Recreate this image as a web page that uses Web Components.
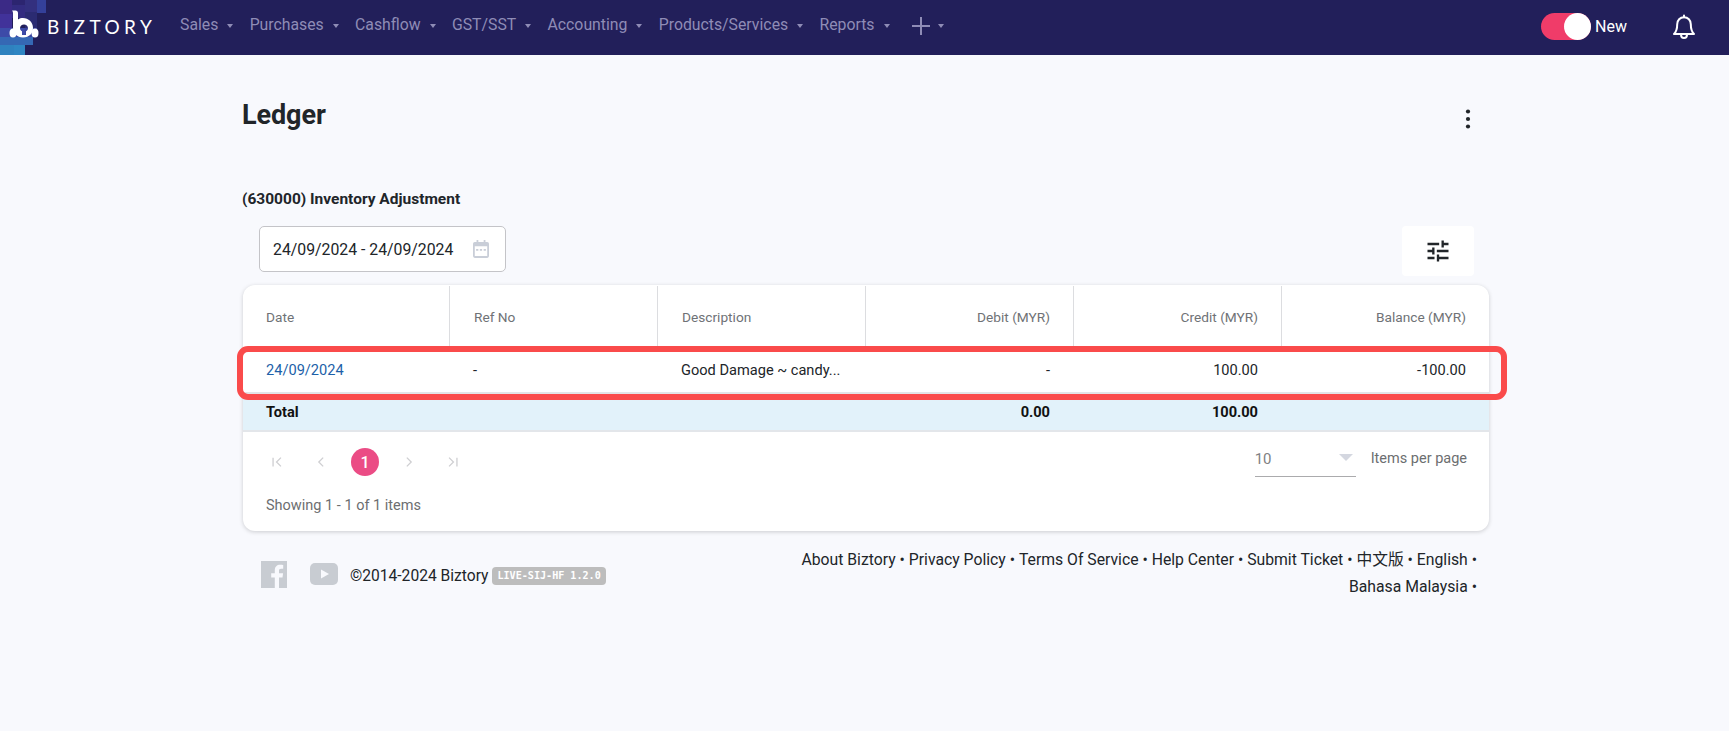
<!DOCTYPE html>
<html lang="en">
<head>
<meta charset="utf-8">
<title>Ledger</title>
<style>
  html, body { margin: 0; height: 100%; }
  body { background: #f8f9fd; font-family: Roboto, "Noto Sans CJK SC", sans-serif; color: #212529; overflow: hidden; }
</style>
</head>
<body>
<biz-nav>
  <nav-item>Sales</nav-item>
  <nav-item>Purchases</nav-item>
  <nav-item>Cashflow</nav-item>
  <nav-item>GST/SST</nav-item>
  <nav-item>Accounting</nav-item>
  <nav-item>Products/Services</nav-item>
  <nav-item>Reports</nav-item>
  <nav-item plus></nav-item>
</biz-nav>
<ledger-page title="Ledger" account="(630000) Inventory Adjustment" range="24/09/2024 - 24/09/2024">
  <ledger-table></ledger-table>
  <biz-footer></biz-footer>
</ledger-page>

<script>
/* top bar */
const navTemplate = document.createElement('template');
navTemplate.innerHTML = `
  <style>
    :host { display: flex; align-items: center; height: 55px; background: #221f5a; position: relative; }
    .logo { display: block; width: 46px; height: 55px; flex: none; }
    .brand { width: 133px; flex: none; color: #fff; font: 400 19px Lato, sans-serif; letter-spacing: 4.45px; margin-left: 1px; position: relative; top: -1px; white-space: nowrap; }
    .items { display: flex; align-items: center; gap: 16.3px; flex: 1; position: relative; top: -3px; }
    .right { display: flex; align-items: center; padding-right: 33px; position: relative; top: -1px; }
    .switch { width: 50px; height: 27px; border-radius: 14px; background: #f03c69; position: relative; }
    .switch::after { content: ''; position: absolute; right: 0; top: 0; width: 27px; height: 27px; border-radius: 50%; background: #fff; }
    .new { color: #fff; font-size: 16px; margin-left: 4px; margin-right: 45px; }
    .bell { display: block; width: 24px; height: 26px; }
  </style>
  <svg class="logo" viewBox="0 0 46 55">
    <rect width="46" height="55" fill="#221f5a"/>
    <rect x="0" y="0" width="12" height="14" fill="#3b2a86"/>
    <rect x="12" y="0" width="13" height="5" fill="#2c2570"/>
    <rect x="25" y="0" width="12" height="12" fill="#33307f"/>
    <rect x="37" y="0" width="9" height="13" fill="#34409a"/>
    <rect x="0" y="14" width="12" height="14" fill="#41329a"/>
    <rect x="12" y="5" width="13" height="13" fill="#332c80"/>
    <rect x="25" y="12" width="12" height="16" fill="#2b2b72"/>
    <rect x="0" y="28" width="25" height="9" fill="#3d4ba8"/>
    <rect x="25" y="28" width="12" height="9" fill="#3a45a0"/>
    <rect x="0" y="37" width="33" height="8" fill="#3568b4"/>
    <rect x="0" y="45" width="14" height="10" fill="#2f82bf"/>
    <rect x="14" y="45" width="11" height="10" fill="#2f86c3"/>
    <ellipse cx="13" cy="33" rx="3.500" ry="4.500" fill="#fff"/>
    <ellipse cx="35" cy="33" rx="3.500" ry="4.500" fill="#fff"/>
    <path fill="#fff" fill-rule="evenodd" d="M13 10.500h2.500c1.500 0 2.500 1 2.500 2.500v6.500c1.500-.9 3.200-1.400 5-1.400 5.500 0 10 4.300 10 9.700 0 5.400-3.500 9.700-10 9.700-6 0-10-4.300-10-9.700V13.500c0-1.300-.4-2.200-1-3zM24 24.500c-2.200 0-4 1.500-4 3.700 0 1.400.8 2.500 2 3.100V35h4v-3.700c1.200-.6 2-1.700 2-3.100 0-2.200-1.800-3.700-4-3.700z"/>
  </svg>
  <div class="brand">BIZTORY</div>
  <div class="items"><slot></slot></div>
  <div class="right">
    <div class="switch"></div>
    <span class="new">New</span>
    <svg class="bell" viewBox="0 0 24 26" fill="none" stroke="#fff" stroke-width="2" stroke-linecap="round" stroke-linejoin="round">
      <path d="M12 3.200c-4 0-6.800 3-6.800 7 0 5.500-1.200 7.800-3.200 9.800h20c-2-2-3.200-4.300-3.200-9.800 0-4-2.800-7-6.800-7z"/>
      <path d="M12 1.500v1.700M9 20.500c0 2 1.300 3.500 3 3.500s3-1.500 3-3.500"/>
    </svg>
  </div>
`;
class BizNav extends HTMLElement {
  constructor() {
    super();
    this.attachShadow({ mode: 'open' }).appendChild(navTemplate.content.cloneNode(true));
  }
}
customElements.define('biz-nav', BizNav);

class NavItem extends HTMLElement {
  constructor() {
    super();
    this.attachShadow({ mode: 'open' }).innerHTML = `
      <style>
        :host { display: inline-flex; align-items: center; color: #8f8cb6; font-size: 15.8px; white-space: nowrap; }
        .caret { width: 0; height: 0; margin-left: 9px; border: 3.750px solid transparent; border-top: 4px solid #8f8cb6; border-bottom: 0; position: relative; top: 1px; }
        .plus { display: block; width: 20px; height: 20px; margin: 2px -2px 0 5px; }
      </style>
      ${this.hasAttribute('plus') ? '<svg class="plus" viewBox="0 0 20 20"><path d="M1 10h18M10 1v18" stroke="#8f8cb6" stroke-width="2"/></svg>' : '<slot></slot>'}
      <span class="caret"></span>`;
  }
}
customElements.define('nav-item', NavItem);

/* page head + filter row */
class LedgerPage extends HTMLElement {
  constructor() {
    super();
    this.attachShadow({ mode: 'open' }).innerHTML = `
      <style>
        :host { display: block; padding: 42px 240px 0 242px; }
        .head { display: flex; justify-content: space-between; align-items: flex-start; height: 92px; }
        h1 { margin: 0; font-size: 27px; line-height: 36px; font-weight: 700; color: #212529; letter-spacing: -.1px; }
        .dots { display: block; width: 24px; height: 24px; margin: 10px 9px 0 0; }
        .account { font-size: 15.5px; line-height: 20px; font-weight: 700; color: #212529; height: 37px; }
        .filters { display: flex; justify-content: space-between; align-items: flex-start; padding-left: 17px; height: 59px; }
        .range { display: flex; align-items: center; box-sizing: border-box; width: 247px; height: 46px; padding: 0 16px 0 13px; background: #fff; border: 1px solid #c4c4c8; border-radius: 5px; font-size: 15.8px; color: #212529; white-space: nowrap; justify-content: space-between; }
        .range svg { display: block; width: 16px; height: 18px; flex: none; }
        .tune { display: flex; align-items: center; justify-content: center; width: 72px; height: 50px; background: #fff; border-radius: 4px; margin-right: 15px; }
        .tune svg { display: block; width: 28px; height: 28px; }
      </style>
      <div class="head">
        <h1>${this.getAttribute('title')}</h1>
        <svg class="dots" viewBox="0 0 24 24" fill="#212529"><circle cx="12" cy="4.500" r="2.100"/><circle cx="12" cy="12" r="2.100"/><circle cx="12" cy="19.500" r="2.100"/></svg>
      </div>
      <div class="account">${this.getAttribute('account')}</div>
      <div class="filters">
        <div class="range">
          <span>${this.getAttribute('range')}</span>
          <svg viewBox="0 0 18 20" fill="#c9ced8"><path d="M4 0h2v2h6V0h2v2h2a2 2 0 0 1 2 2v14a2 2 0 0 1-2 2H2a2 2 0 0 1-2-2V4a2 2 0 0 1 2-2h2zM2 7v11h14V7z"/><rect x="3.500" y="10" width="2.500" height="2"/><rect x="7.700" y="10" width="2.500" height="2"/><rect x="12" y="10" width="2.500" height="2"/></svg>
        </div>
        <div class="tune"><svg viewBox="0 0 24 24" fill="#212529"><path d="M3 17v2h6v-2H3zM3 5v2h10V5H3zm10 16v-2h8v-2h-8v-2h-2v6h2zM7 9v2H3v2h4v2h2V9H7zm14 4v-2H11v2h10zm-6-4h2V7h4V5h-4V3h-2v6z"/></svg></div>
      </div>
      <slot></slot>`;
  }
}
customElements.define('ledger-page', LedgerPage);

/* table card with pager */
const tableTemplate = document.createElement('template');
tableTemplate.innerHTML = `
  <style>
    :host { display: block; position: relative; margin-left: 1px; background: #fff; border-radius: 12px; box-shadow: 0 1px 4px rgba(0,0,0,.18); height: 246px; font-size: 14.6px; }
    .row { display: grid; grid-template-columns: 206px 208px 208px 208px 208px 208px; align-items: center; }
    .row > div { padding: 0 23px 0 24px; white-space: nowrap; }
    .row > div:first-child { padding-left: 23px; }
    .r { text-align: right; }
    .head { height: 61px; color: #6f7276; font-size: 13.7px; align-items: stretch; }
    .head > div { display: flex; align-items: center; border-left: 1px solid #dcdde0; position: relative; top: 1px; }
    .head > div:first-child { border-left: 0; }
    .head > .r { justify-content: flex-end; }
    .body { height: 46px; color: #212529; border-bottom: 2px solid #e3e4e6; }
    .body > div { position: relative; top: 1px; }
    .body a { color: #1c5fa8; text-decoration: none; }
    .total { height: 36px; background: #e2f2fa; color: #111; font-weight: 700; border-bottom: 2px solid #e3e6ea; }
    .foot { display: flex; justify-content: space-between; align-items: flex-start; padding: 14px 22px 0 12px; height: 40px; color: #6c6e70; }
    .pager { display: flex; align-items: center; height: 28px; margin-top: 2px; }
    .pager svg { display: block; width: 14px; height: 14px; fill: none; stroke: #cfcfd2; stroke-width: 1.500; }
    .pager .p { display: flex; align-items: center; justify-content: center; width: 44px; height: 28px; }
    .pager b { display: flex; align-items: center; justify-content: center; width: 28px; height: 28px; margin: 0 8px 0 8px; border-radius: 50%; background: #eb4c85; color: #fff; font-weight: 500; font-size: 16px; }
    .per { display: flex; align-items: flex-start; }
    .select { display: flex; justify-content: space-between; box-sizing: border-box; width: 101px; height: 31px; padding: 4px 3px 0 0; border-bottom: 1px solid #ababad; font-size: 15px; color: #808184; margin-right: 15px; }
    .select i { display: block; width: 0; height: 0; margin-top: 4px; border: 7px solid transparent; border-top: 7px solid #d4d7e0; border-bottom: 0; }
    .label { padding-top: 4px; font-size: 14.5px; }
    .showing { padding: 11px 0 0 23px; font-size: 14.5px; color: #6c6e70; }
    .mark { position: absolute; left: -6px; right: -18px; top: 61px; height: 54px; box-sizing: border-box; border: 6px solid #fa4b4b; border-radius: 11px; pointer-events: none; }
  </style>
  <div class="row head">
    <div>Date</div><div>Ref No</div><div>Description</div>
    <div class="r">Debit (MYR)</div><div class="r">Credit (MYR)</div><div class="r">Balance (MYR)</div>
  </div>
  <div class="row body">
    <div><a href="#">24/09/2024</a></div><div>-</div><div>Good Damage ~ candy...</div>
    <div class="r">-</div><div class="r">100.00</div><div class="r">-100.00</div>
  </div>
  <div class="row total">
    <div>Total</div><div></div><div></div><div class="r">0.00</div><div class="r">100.00</div><div></div>
  </div>
  <div class="foot">
    <div class="pager">
      <span class="p"><svg viewBox="0 0 16 16"><path d="M3.500 3v10M12.500 3l-5 5 5 5"/></svg></span>
      <span class="p"><svg viewBox="0 0 16 16"><path d="M10.500 3l-5 5 5 5"/></svg></span>
      <b>1</b>
      <span class="p"><svg viewBox="0 0 16 16"><path d="M5.500 3l5 5-5 5"/></svg></span>
      <span class="p"><svg viewBox="0 0 16 16"><path d="M3.500 3l5 5-5 5M12.500 3v10"/></svg></span>
    </div>
    <div class="per">
      <div class="select"><span>10</span><i></i></div>
      <span class="label">Items per page</span>
    </div>
  </div>
  <div class="showing">Showing 1 - 1 of 1 items</div>
  <div class="mark"></div>
`;
class LedgerTable extends HTMLElement {
  constructor() {
    super();
    this.attachShadow({ mode: 'open' }).appendChild(tableTemplate.content.cloneNode(true));
  }
}
customElements.define('ledger-table', LedgerTable);

/* footer */
const FOOTER_LINKS = ['About Biztory', 'Privacy Policy', 'Terms Of Service', 'Help Center', 'Submit Ticket', '中文版', 'English', 'Bahasa Malaysia'];

class BizFooter extends HTMLElement {
  constructor() {
    super();
    const links = FOOTER_LINKS.map(l => `<span class="link">${l} •</span>`).join(' ');
    this.attachShadow({ mode: 'open' }).innerHTML = `
      <style>
        :host { display: flex; justify-content: space-between; padding: 15px 12px 0 19px; font-size: 15.75px; color: #212529; }
        .left { display: flex; align-items: center; height: 56px; }
        .fb { display: block; width: 26px; height: 27px; margin-right: 23px; }
        .yt { display: block; width: 28px; height: 22px; margin-right: 12px; }
        .copy { position: relative; top: 2px; white-space: nowrap; font-size: 15.6px; }
        .badge { position: relative; top: 2px; margin-left: 4px; padding: 0 5px; height: 18px; background: #bdbdbd; color: #fff; border-radius: 4px; font: 700 10.100px/18px "DejaVu Sans Mono", monospace; white-space: nowrap; }
        .links { width: 690px; text-align: right; line-height: 27px; }
        .link { display: inline-block; white-space: nowrap; }
      </style>
      <div class="left">
        <svg class="fb" viewBox="0 0 26 27"><path fill="#c8ccd2" d="M0 0h26v27h-8V16.500h3.500l.6-4.200H18V9.700c0-1.200.4-2 2.100-2h2.100V4c-.4 0-1.700-.2-3.100-.2-3.100 0-5.300 1.900-5.300 5.400v3.100h-3.600v4.200h3.600V27H0z"/></svg>
        <svg class="yt" viewBox="0 0 28 22"><rect width="28" height="22" rx="5" fill="#c8ccd2"/><path d="M11 6.500l8 4.500-8 4.500z" fill="#f8f9fd"/></svg>
        <span class="copy">©2014-2024 Biztory</span>
        <span class="badge">LIVE-SIJ-HF 1.2.0</span>
      </div>
      <div class="links">${links}</div>`;
  }
}
customElements.define('biz-footer', BizFooter);
</script>
</body>
</html>
